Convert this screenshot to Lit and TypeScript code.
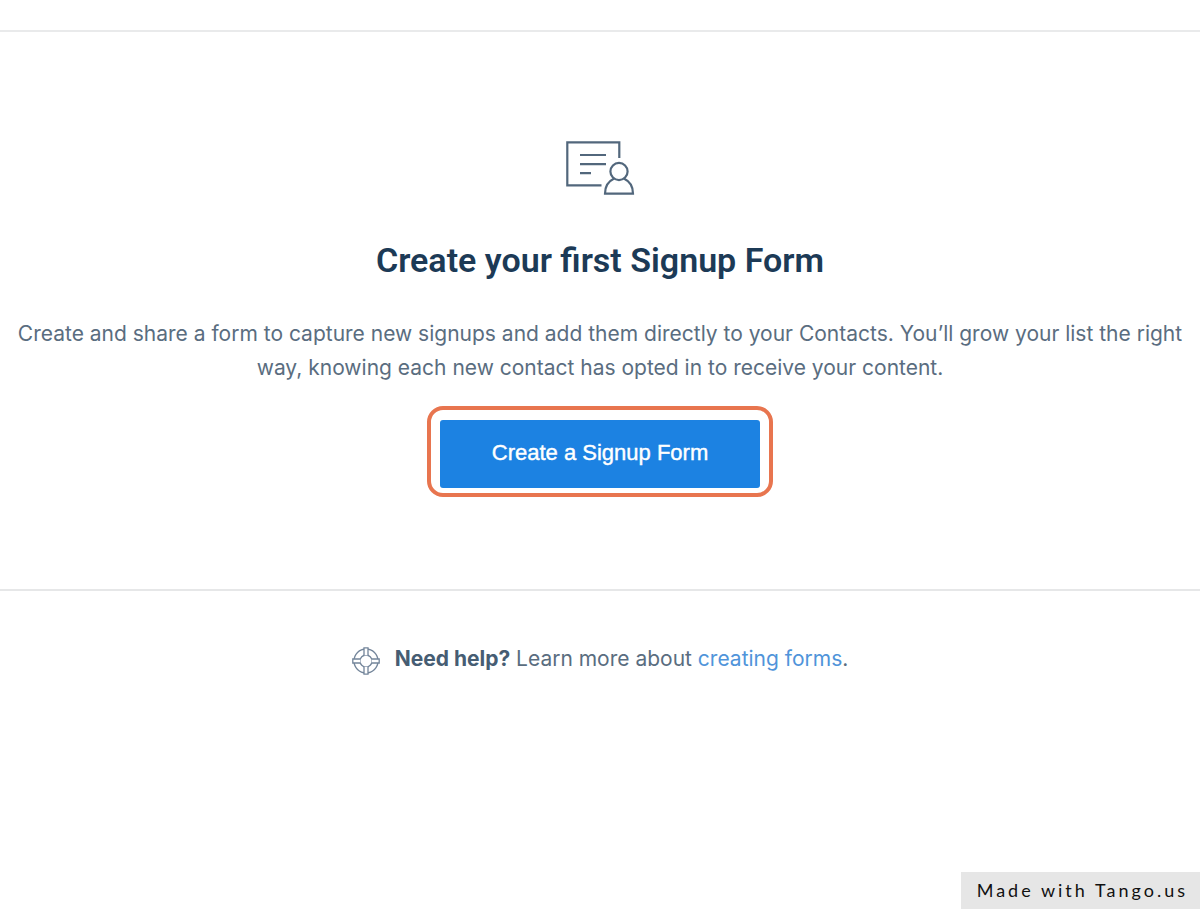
import { LitElement, html, css } from "lit";
import { customElement } from "lit/decorators.js";

@customElement("app-root")
export class AppRoot extends LitElement {
  static styles = css`
    :host {
      display: block;
      font-family: Inter, "Liberation Sans", sans-serif;
      color: #5a6d80;
      background: #fff;
    }
    .page {
      box-sizing: border-box;
      min-height: 100vh;
      padding-top: 30px;
    }
    .empty {
      display: flex;
      flex-direction: column;
      align-items: center;
      border-top: 2px solid #e9eaeb;
      border-bottom: 2px solid #e6e7e8;
      padding: 107px 2px 92px;
      text-align: center;
    }
    .form-icon {
      display: block;
      width: 70px;
      height: 56px;
    }
    h1 {
      margin: 45px 0 0;
      font: 600 34px/40px Roboto, sans-serif;
      color: #1c3a56;
    }
    .lead {
      margin: 37px 0 0;
      font-size: 21px;
      line-height: 34px;
    }
    .highlight {
      margin-top: 21px;
      padding: 10px 9px 5px;
      border: 4px solid #e8754f;
      border-radius: 16px;
    }
    .create {
      display: block;
      padding: 0 52px 2px;
      border: 0;
      border-radius: 3px;
      background: #1c82e2;
      color: #fff;
      font: 22px/66px "Liberation Sans", Arial, sans-serif;
      -webkit-text-stroke: 0.4px #fff;
      cursor: pointer;
    }
    .help {
      display: flex;
      justify-content: center;
      align-items: center;
      gap: 15px;
      margin: 50px 0 0;
      font-size: 21px;
      line-height: 36px;
    }
    .help-icon {
      width: 28px;
      height: 28px;
      margin-top: 4px;
    }
    strong {
      font-weight: 700;
      color: #465d73;
    }
    a {
      color: #5094da;
      text-decoration: none;
    }
    .badge {
      position: fixed;
      right: 0;
      bottom: 1px;
      padding: 0 12px 0 16px;
      background: #e6e6e6;
      color: #111;
      font: 18px/37px Lato, sans-serif;
      letter-spacing: 3px;
    }
  `;

  render() {
    return html`
      <main class="page">
        <section class="empty">
          <svg class="form-icon" viewBox="0 0 70 56" fill="none" stroke="#52677c" stroke-width="2.200" aria-hidden="true">
            <path d="M36.500 46.300H2.300V3.400H54.300V19" />
            <path d="M15 16H41M15 25.200H41M15 34.200H26" />
            <circle cx="54" cy="32.500" r="8.600" />
            <path d="M48.800 39.800C43 42.500 40 47 40 54.700H68C68 47 65 42.500 59.200 39.800" />
          </svg>
          <h1>Create your first Signup Form</h1>
          <p class="lead">
            Create and share a form to capture new signups and add them directly to your Contacts.
            You’ll grow your list the right way, knowing each new contact has opted in to receive
            your content.
          </p>
          <div class="highlight">
            <button class="create" type="button">Create a Signup Form</button>
          </div>
        </section>
        <p class="help">
          <svg class="help-icon" viewBox="0 0 28 28" fill="none" stroke="#73859a" stroke-width="1.300" aria-hidden="true">
            <circle cx="14" cy="14" r="12" />
            <circle cx="14" cy="14" r="6" />
            <path fill="#fff" d="M12 8.300V.8H16V8.300M12 19.700V27.200H16V19.700M8.300 12H.8V16H8.300M19.700 12H27.200V16H19.700" />
          </svg>
          <span><strong>Need help?</strong> Learn more about <a href="#forms">creating forms</a>.</span>
        </p>
      </main>
      <div class="badge">Made with Tango.us</div>
    `;
  }
}
